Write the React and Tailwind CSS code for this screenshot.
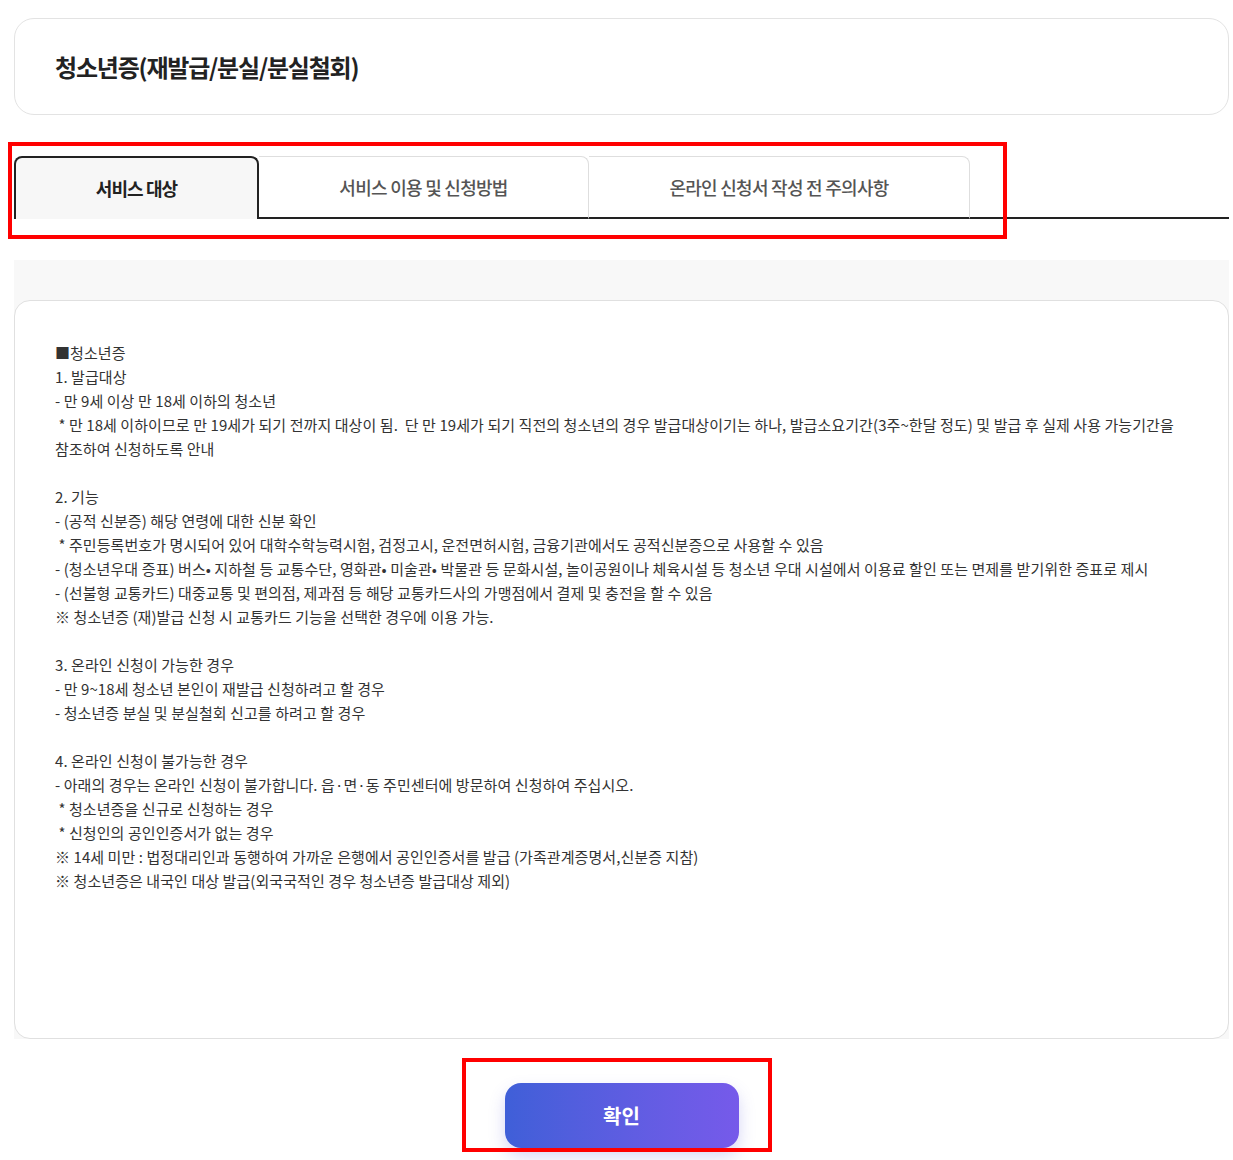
const lines = [
  '■청소년증',
  '1. 발급대상',
  '- 만 9세 이상 만 18세 이하의 청소년',
  ' * 만 18세 이하이므로 만 19세가 되기 전까지 대상이 됨.  단 만 19세가 되기 직전의 청소년의 경우 발급대상이기는 하나, 발급소요기간(3주~한달 정도) 및 발급 후 실제 사용 가능기간을',
  '참조하여 신청하도록 안내',
  '',
  '2. 기능',
  '- (공적 신분증) 해당 연령에 대한 신분 확인',
  ' * 주민등록번호가 명시되어 있어 대학수학능력시험, 검정고시, 운전면허시험, 금융기관에서도 공적신분증으로 사용할 수 있음',
  '- (청소년우대 증표) 버스• 지하철 등 교통수단, 영화관• 미술관• 박물관 등 문화시설, 놀이공원이나 체육시설 등 청소년 우대 시설에서 이용료 할인 또는 면제를 받기위한 증표로 제시',
  '- (선불형 교통카드) 대중교통 및 편의점, 제과점 등 해당 교통카드사의 가맹점에서 결제 및 충전을 할 수 있음',
  '※ 청소년증 (재)발급 신청 시 교통카드 기능을 선택한 경우에 이용 가능.',
  '',
  '3. 온라인 신청이 가능한 경우',
  '- 만 9~18세 청소년 본인이 재발급 신청하려고 할 경우',
  '- 청소년증 분실 및 분실철회 신고를 하려고 할 경우',
  '',
  '4. 온라인 신청이 불가능한 경우',
  '- 아래의 경우는 온라인 신청이 불가합니다. 읍·면·동 주민센터에 방문하여 신청하여 주십시오.',
  ' * 청소년증을 신규로 신청하는 경우',
  ' * 신청인의 공인인증서가 없는 경우',
  '※ 14세 미만 : 법정대리인과 동행하여 가까운 은행에서 공인인증서를 발급 (가족관계증명서,신분증 지참)',
  '※ 청소년증은 내국인 대상 발급(외국국적인 경우 청소년증 발급대상 제외)',
]

const tabs = ['서비스 대상', '서비스 이용 및 신청방법', '온라인 신청서 작성 전 주의사항']
const tabWidths = ['w-[245px]', 'w-[330px]', 'w-[381px]']

export default function App() {
  return (
    <div
      className="relative min-h-[1160px] bg-white pt-[18px] text-[#333]"
      style={{ fontFamily: '"Noto Sans CJK KR", "Noto Sans", sans-serif' }}
    >
      <div className="ml-[14px] w-[1215px]">
        {/* title card */}
        <div className="flex h-[97px] items-center rounded-[20px] border border-[#e3e3e3] pl-[40px]">
          <h1 className="text-[24px] font-bold tracking-[-0.05em] text-[#222]">청소년증(재발급/분실/분실철회)</h1>
        </div>

        {/* tabs */}
        <div className="mt-[41px] flex h-[63px]">
          {tabs.map((t, i) =>
            i === 0 ? (
              <div
                key={t}
                className={`${tabWidths[i]} flex items-center justify-center rounded-t-[8px] border-2 border-b-0 border-[#222] bg-[#f7f7f7] text-[18px] font-bold tracking-[-0.05em] text-[#222]`}
              >
                {t}
              </div>
            ) : (
              <div
                key={t}
                className={`${tabWidths[i]} flex items-center justify-center rounded-tr-[8px] border-t border-r border-[#dedede] border-b-2 border-b-[#222] text-[18px] font-medium tracking-[-0.04em] text-[#555]`}
              >
                {t}
              </div>
            )
          )}
          <div className="flex-1 border-b-2 border-[#222]" />
        </div>

        {/* content */}
        <div className="mt-[41px] bg-[#f8f8f8] pt-[40px]">
          <div className="h-[739px] rounded-[16px] border border-[#e0e0e0] bg-white px-[40px] pt-[40px] text-[15px] leading-[24px] tracking-[0.005em] text-[#333]">
            {lines.map((l, i) => (
              <div key={i} className="h-[24px] whitespace-pre">
                {l}
              </div>
            ))}
          </div>
        </div>

        {/* confirm */}
        <div className="mt-[44px] flex justify-center pb-[12px]">
          <button className="h-[65px] w-[234px] rounded-[16px] bg-gradient-to-r from-[#3f5fd8] to-[#765aea] text-[20px] font-bold text-white shadow-[0_8px_16px_rgba(90,90,220,0.25)]">
            확인
          </button>
        </div>
      </div>

      {/* annotation boxes */}
      <div className="pointer-events-none absolute left-[8px] top-[142px] h-[97px] w-[999px] border-4 border-[#ff0000]" />
      <div className="pointer-events-none absolute left-[462px] top-[1058px] h-[94px] w-[310px] border-4 border-[#ff0000]" />
    </div>
  )
}
